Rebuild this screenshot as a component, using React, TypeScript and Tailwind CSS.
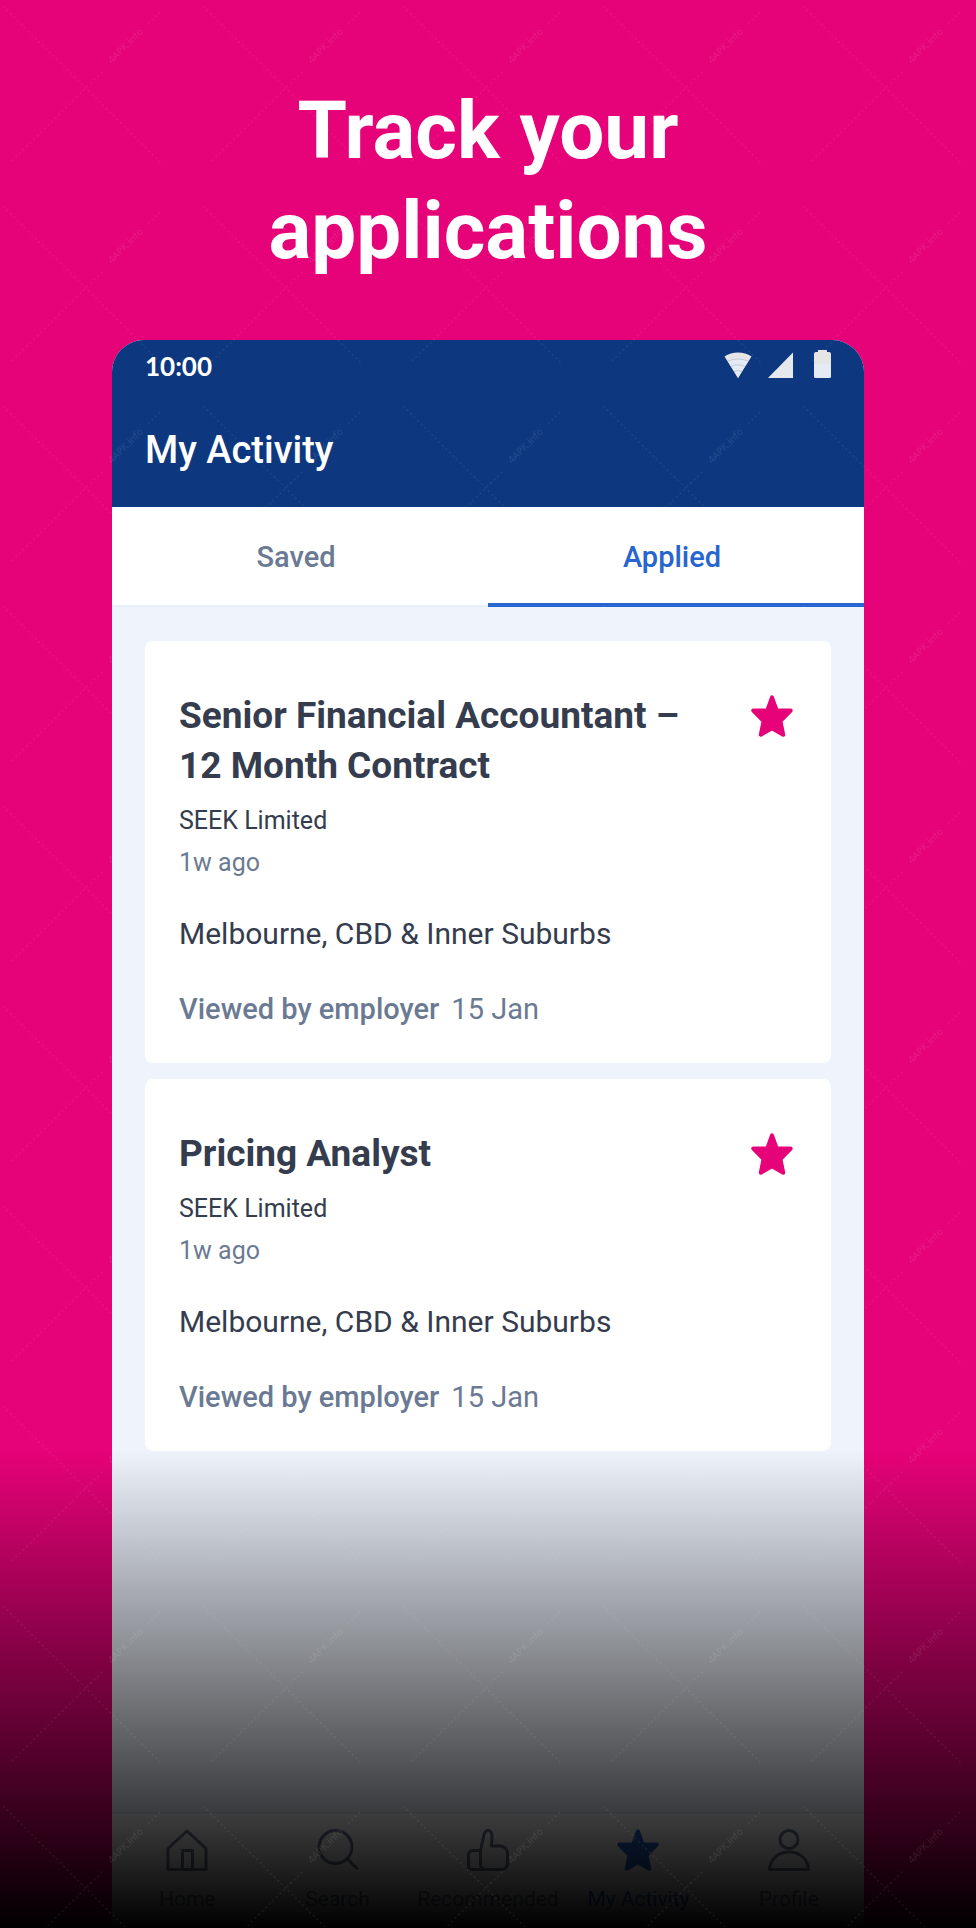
import React, { useState } from "react";

const jobs = [
  {
    title: "Senior Financial Accountant – 12 Month Contract",
    company: "SEEK Limited",
    posted: "1w ago",
    location: "Melbourne, CBD & Inner Suburbs",
    status: "Viewed by employer",
    date: "15 Jan",
  },
  {
    title: "Pricing Analyst",
    company: "SEEK Limited",
    posted: "1w ago",
    location: "Melbourne, CBD & Inner Suburbs",
    status: "Viewed by employer",
    date: "15 Jan",
  },
];

const tabs = ["Saved", "Applied"];

function StarIcon() {
  return (
    <svg
      className="w-[42px] h-[42px]"
      viewBox="0 0 42 42"
      fill="currentColor"
      stroke="currentColor"
      strokeWidth={4}
      strokeLinejoin="round"
      aria-hidden="true"
    >
      <path d="M21 2.4l4.700 13.100h14L29.400 26l2.800 13.700L21 33.200 9.800 39.700 12.600 26 2.300 15.500h14z" />
    </svg>
  );
}

function LineIcon({ children }: { children: React.ReactNode }) {
  return (
    <svg
      className="w-[42px] h-[42px]"
      viewBox="0 0 42 42"
      fill="none"
      stroke="currentColor"
      strokeWidth={3}
      strokeLinecap="round"
      strokeLinejoin="round"
      aria-hidden="true"
    >
      {children}
    </svg>
  );
}

const navigation = [
  {
    name: "Home",
    href: "#home",
    icon: (
      <LineIcon>
        <path d="M2 19.500L21 2l19 17.500v21H2z" />
        <path d="M16.500 40.500v-19h10v19" />
      </LineIcon>
    ),
  },
  {
    name: "Search",
    href: "#search",
    icon: (
      <LineIcon>
        <circle cx="18.500" cy="18" r="16.500" />
        <path d="M31 30.500l9 9" />
      </LineIcon>
    ),
  },
  {
    name: "Recommended",
    href: "#recommended",
    icon: (
      <LineIcon>
        <path d="M13.500 21.500H6c-2.800 0-4.500 1.700-4.500 4.500v10.500c0 2.500 1.500 4 4 4h29c3.500 0 6-2.500 6-6V25c0-5-3-8-8-8h-8l.500-9c.200-4-1.400-6.500-3.800-6.500-2 0-3.300 1.300-4 3.700L13.500 21.500v13c0 3.500 1.500 6 4.500 6" />
      </LineIcon>
    ),
  },
  { name: "My Activity", href: "#activity", icon: <StarIcon /> },
  {
    name: "Profile",
    href: "#profile",
    icon: (
      <LineIcon>
        <circle cx="21" cy="10.500" r="9" />
        <path d="M1.500 40.500C2 30.500 10 23 21 23s19 7.500 19.500 17.500z" />
      </LineIcon>
    ),
  },
];

function StatusIcons() {
  return (
    <div className="flex items-end pb-1 text-[#e5e8ed]">
      <svg className="w-7 h-7" viewBox="0 0 28 28" aria-hidden="true">
        <path d="M.5 6.500C8 1 20 1 27.500 6.500L14 28z" fill="#e5e5e5" />
        <path d="M3.800 11c6-2.700 14.400-2.700 20.400 0L14 28z" fill="#e5ebf4" />
        <path
          d="M4 11q10-4 20 0M7 16.500q7-3.500 14 0M10 21.500q4-2 8 0"
          fill="none"
          stroke="#b8c4d8"
          strokeWidth={0.8}
        />
      </svg>
      <svg className="w-[26px] h-7 ml-4" viewBox="0 0 26 28" aria-hidden="true">
        <path d="M0 28L25 2.500V28z" fill="currentColor" />
      </svg>
      <svg className="w-[17px] h-7 ml-5" viewBox="0 0 17 28" aria-hidden="true">
        <path
          d="M4 0h9v2h2q2 0 2 2v22q0 2-2 2H2q-2 0-2-2V4q0-2 2-2h2z"
          fill="#e5e5e5"
        />
        <path d="M0 14h17v12q0 2-2 2H2q-2 0-2-2z" fill="#e5ebf4" />
      </svg>
    </div>
  );
}

function JobCard({ job }: { job: (typeof jobs)[number] }) {
  const [saved, setSaved] = useState(true);

  return (
    <article className="flex items-start justify-between rounded-lg bg-white pl-[34px] pr-[38px] pt-[50px] pb-[33px]">
      <div className="flex-1">
        <h2 className="text-[37px] leading-[50px] font-bold max-w-[540px]">
          {job.title}
        </h2>
        <p className="mt-[9px] text-[25px] leading-[42px]">{job.company}</p>
        <p className="text-[25px] leading-[42px] text-[#6b7a93]">
          {job.posted}
        </p>
        <p className="mt-[29px] text-[30px] leading-[42px]">{job.location}</p>
        <p className="mt-[33px] text-[29px] leading-[42px] text-[#6b7a93]">
          <span className="font-medium mr-3">{job.status}</span>
          {job.date}
        </p>
      </div>
      <button
        className={`mt-1 ${saved ? "text-[#e60278]" : "text-[#6b7a93]"}`}
        onClick={() => setSaved(!saved)}
        aria-label="Save job"
      >
        <StarIcon />
      </button>
    </article>
  );
}

function Watermark() {
  return (
    <svg
      className="absolute inset-0 w-full h-full pointer-events-none"
      aria-hidden="true"
    >
      <defs>
        <pattern
          id="watermark"
          width="200"
          height="200"
          patternUnits="userSpaceOnUse"
        >
          <path
            d="M3 6L162 164M12 161L103 71M148 24L160 12"
            fill="none"
            stroke="#fff"
            strokeOpacity={0.06}
            strokeWidth={1.5}
            strokeDasharray="2 3"
          />
          <text
            x="112"
            y="64"
            transform="rotate(-45 112 64)"
            fill="#fff"
            fillOpacity={0.09}
            fontSize="10"
            fontFamily="Open Sans, sans-serif"
          >
            4APK.info
          </text>
        </pattern>
      </defs>
      <rect width="100%" height="100%" fill="url(#watermark)" />
    </svg>
  );
}

export default function App() {
  const [activeTab, setActiveTab] = useState("Applied");

  return (
    <div className="relative min-h-screen flex flex-col bg-[#e60278] px-28 font-[Roboto,sans-serif] text-[#343c4e]">
      <h1 className="pt-[81px] pb-[59px] text-center text-[80px] leading-[100px] font-bold text-white">
        Track your
        <br />
        applications
      </h1>

      <div className="flex-1 flex flex-col overflow-hidden rounded-t-[32px] bg-[#eef3fc]">
        <header className="bg-[#0d3880] text-white px-[33px]">
          <div className="flex items-center justify-between h-[52px]">
            <span className="font-[Lato,sans-serif] text-[26px] font-bold">
              10:00
            </span>
            <StatusIcons />
          </div>
          <div className="flex items-center h-[115px] pt-0.5 text-[38px] font-medium">
            My Activity
          </div>
        </header>

        {/* Tabs */}
        <div className="flex h-[100px] bg-white" role="tablist">
          {tabs.map((tab) => (
            <button
              key={tab}
              role="tab"
              aria-selected={tab === activeTab}
              onClick={() => setActiveTab(tab)}
              className={`flex-1 pt-1.5 pr-2 text-[29px] font-medium ${
                tab === activeTab
                  ? "border-b-4 border-[#2765cf] text-[#2765cf]"
                  : "border-b-2 border-[#e9effc] pb-0.5 text-[#6b7a93]"
              }`}
            >
              {tab}
            </button>
          ))}
        </div>

        <main className="flex flex-col gap-4 px-[33px] pt-[34px] pb-8">
          {jobs.map((job) => (
            <JobCard key={job.title} job={job} />
          ))}
        </main>

        {/* Bottom navigation */}
        <nav
          className="mt-auto grid grid-cols-5 h-[116px] border-t-2 border-[#e4e9f5] bg-white"
          aria-label="Main"
        >
          {navigation.map((item) => (
            <a
              key={item.name}
              href={item.href}
              className={`flex flex-col items-center gap-3 pt-[15px] text-[21px] leading-8 ${
                item.name === "My Activity"
                  ? "text-[#2765cf]"
                  : "text-[#6b7a93]"
              }`}
            >
              {item.icon}
              {item.name}
            </a>
          ))}
        </nav>
      </div>

      {/* Fade to black at the bottom */}
      <div className="absolute inset-x-0 bottom-0 h-[478px] bg-linear-to-b from-black/0 to-black pointer-events-none" />
      <Watermark />
    </div>
  );
}
